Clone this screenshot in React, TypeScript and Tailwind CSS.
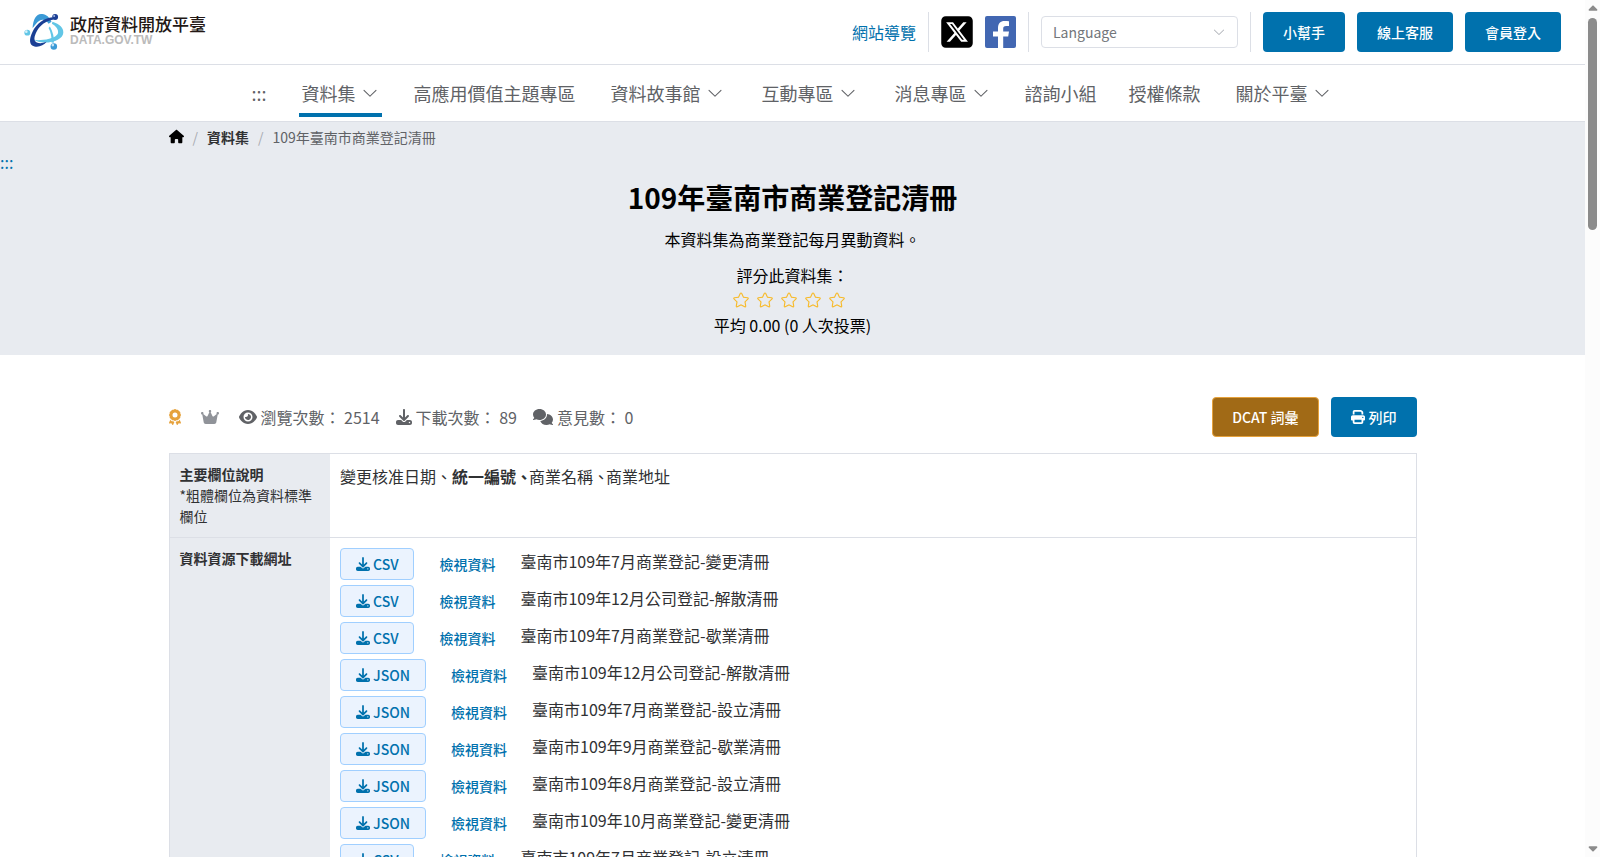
import type { ReactNode } from "react";
import {
  FaAward,
  FaCaretDown,
  FaCaretUp,
  FaComments,
  FaCrown,
  FaDownload,
  FaEye,
  FaHouse,
  FaPrint,
  FaSquareXTwitter,
} from "react-icons/fa6";

function ChevronDown({ className }: { className: string }) {
  return (
    <svg viewBox="0 0 1024 1024" fill="currentColor" aria-hidden="true" className={className}>
      <path d="M831.872 340.864 512 652.672 192.128 340.864a30.592 30.592 0 0 0-42.752 0 29.12 29.12 0 0 0 0 41.6L489.664 714.24a32 32 0 0 0 44.672 0l340.288-331.712a29.12 29.12 0 0 0 0-41.728 30.592 30.592 0 0 0-42.752 0z" />
    </svg>
  );
}

function Star() {
  return (
    <svg viewBox="0 0 1024 1024" fill="currentColor" aria-hidden="true" className="size-[18px]">
      <path d="m512 747.84 228.16 119.936a6.4 6.4 0 0 0 9.28-6.72l-43.52-254.08 184.512-179.904a6.4 6.4 0 0 0-3.52-10.88l-255.104-37.12L517.76 147.904a6.4 6.4 0 0 0-11.52 0L392.192 379.072l-255.104 37.12a6.4 6.4 0 0 0-3.52 10.88L318.08 606.976l-43.584 254.08a6.4 6.4 0 0 0 9.28 6.72L512 747.84zM313.6 924.48a70.4 70.4 0 0 1-102.144-74.24l37.888-220.928L88.96 472.96A70.4 70.4 0 0 1 128 352.896l221.76-32.256 99.2-200.96a70.4 70.4 0 0 1 126.208 0l99.2 200.96 221.824 32.256a70.4 70.4 0 0 1 39.04 120.064L774.72 629.376l37.888 220.928a70.4 70.4 0 0 1-102.144 74.24L512 820.096l-198.4 104.32z" />
    </svg>
  );
}

function LogoMark() {
  return (
    <svg viewBox="0 0 120 110" aria-hidden="true" className="h-9 w-10">
      <path d="M25 43C27 16 36 1 51 0c14-1 25 9 32 24l-9 6C68 20 60 16 52 18c-10 2-17 12-27 25Z" fill="#3b9ad6" />
      <path d="M86 24c22 7 34 19 33 33-1 17-25 30-57 30-14 0-26-3-33-8 11 2 20 1 29 0 26-3 44-12 45-22 1-9-5-19-19-27Z" fill="#62c6e6" />
      <path d="M78 38c9 16 14 34 12 50l-7-1c1-15-2-31-9-44Z" fill="#62c6e6" />
      <path d="M89 17C66 21 48 34 38 53c-9 17-10 30 0 34 7 3 17 3 30-2-8 12-25 17-37 14C14 95 14 76 25 54 37 30 60 12 86 10Z" fill="#1b3f94" />
      <circle cx="94" cy="9" r="9" fill="#1b3f94" />
      <circle cx="91" cy="6" r="3" fill="#a9bfe6" />
      <circle cx="9" cy="57" r="9" fill="#62c6e6" />
      <circle cx="6" cy="54" r="4" fill="#d5f1fa" />
      <circle cx="90" cy="99" r="10" fill="#3b9ad6" />
      <circle cx="87" cy="95" r="4" fill="#c4e4f6" />
    </svg>
  );
}

function FacebookSquare() {
  return (
    <svg viewBox="0 0 31 32" aria-hidden="true" className="h-8 w-[31px]">
      <rect width="31" height="32" rx="2" fill="#4267b2" />
      <path d="M13 32V20.500H8V15.500h5v-3.500C13 7.500 15.500 5 19.500 5c1.600 0 3 .1 4.500.3v4.700h-2.800c-2.300 0-3 1-3 2.700v2.800H24l-.8 5h-5V32Z" fill="#fff" />
    </svg>
  );
}

const navItems = [
  { label: "資料集", menu: true, active: true },
  { label: "高應用價值主題專區" },
  { label: "資料故事館", menu: true },
  { label: "互動專區", menu: true },
  { label: "消息專區", menu: true },
  { label: "諮詢小組" },
  { label: "授權條款" },
  { label: "關於平臺", menu: true },
];

const resources = [
  ["CSV", "臺南市109年7月商業登記-變更清冊"],
  ["CSV", "臺南市109年12月公司登記-解散清冊"],
  ["CSV", "臺南市109年7月商業登記-歇業清冊"],
  ["JSON", "臺南市109年12月公司登記-解散清冊"],
  ["JSON", "臺南市109年7月商業登記-設立清冊"],
  ["JSON", "臺南市109年9月商業登記-歇業清冊"],
  ["JSON", "臺南市109年8月商業登記-設立清冊"],
  ["JSON", "臺南市109年10月商業登記-變更清冊"],
  ["CSV", "臺南市109年7月商業登記-設立清冊"],
];

function PrimaryButton({ children }: { children: ReactNode }) {
  return (
    <button
      type="button"
      className="flex h-10 items-center gap-1 rounded bg-[#0071ad] px-5 text-sm font-medium text-white"
    >
      {children}
    </button>
  );
}

function Divider() {
  return <span className="h-10 w-px bg-[#dcdfe6]" />;
}

function Header() {
  return (
    <header className="flex h-[65px] shrink-0 items-center justify-between border-b border-[#dcdfe6] px-6 pb-px">
      <a href="#home" className="flex items-center gap-1.5">
        <LogoMark />
        <span className="flex flex-col pb-1">
          <span className="text-[17px] leading-5 font-medium text-[#231815]">政府資料開放平臺</span>
          <span className="font-['Liberation_Sans',sans-serif] text-xs leading-3 font-bold text-[#bbbbbb]">
            DATA.GOV.TW
          </span>
        </span>
      </a>
      <div className="flex items-center gap-3">
        <a href="#sitemap" className="text-base text-[#0071ad]">
          網站導覽
        </a>
        <Divider />
        <a href="#x" aria-label="X" className="flex w-8 justify-center text-black">
          <FaSquareXTwitter className="size-9 shrink-0" />
        </a>
        <a href="#facebook" aria-label="Facebook">
          <FacebookSquare />
        </a>
        <Divider />
        <label className="relative block">
          <select
            aria-label="Language"
            className="h-8 w-[197px] appearance-none rounded border border-[#dcdfe6] bg-white px-[11px] text-sm text-[#73767a]"
          >
            <option>Language</option>
          </select>
          <ChevronDown className="pointer-events-none absolute top-[9px] right-3 size-3.5 text-[#a8abb2]" />
        </label>
        <Divider />
        <PrimaryButton>小幫手</PrimaryButton>
        <PrimaryButton>線上客服</PrimaryButton>
        <PrimaryButton>會員登入</PrimaryButton>
      </div>
    </header>
  );
}

function MainNav() {
  return (
    <nav className="flex h-[57px] shrink-0 justify-center gap-8 border-b border-[#dcdfe6] text-lg text-[#606266]">
      <a href="#nav" className="flex h-[52px] items-center pt-1">
        :::
      </a>
      {navItems.map((item) => (
        <a
          key={item.label}
          href={`#${item.label}`}
          className={
            item.active
              ? "flex h-[52px] items-center gap-[5px] border-b-4 border-[#0071ad] px-[3px] pt-2"
              : item.menu
                ? "flex h-[52px] items-center gap-[5px] px-[3px] pt-1"
                : "flex h-[52px] items-center pt-1"
          }
        >
          {item.label}
          {item.menu && <ChevronDown className="size-[18px]" />}
        </a>
      ))}
    </nav>
  );
}

function Hero() {
  return (
    <section className="shrink-0 bg-[#e8ebf0] pb-[17px] text-black">
      <nav className="mx-auto flex h-7 w-full max-w-[1248px] items-center pt-px text-sm text-[#606266]">
        <a href="#home" aria-label="首頁" className="text-black">
          <FaHouse className="size-[15px]" />
        </a>
        <span className="px-[9px] text-[#a8abb2]">/</span>
        <a href="#dataset" className="font-bold text-[#303133]">
          資料集
        </a>
        <span className="px-[9px] text-[#a8abb2]">/</span>
        <span>109年臺南市商業登記清冊</span>
      </nav>
      <a href="#content" className="block text-base leading-[25px] text-[#0071ad]">
        :::
      </a>
      <div className="flex flex-col items-center text-base">
        <h1 className="text-[28px] leading-[44px] font-bold">109年臺南市商業登記清冊</h1>
        <p className="py-2 leading-6">本資料集為商業登記每月異動資料。</p>
        <p className="pt-1 leading-6">評分此資料集：</p>
        <div className="flex h-[25px] items-center gap-1.5 pr-2 text-[#f7ba2a]">
          {[1, 2, 3, 4, 5].map((n) => (
            <button key={n} type="button" aria-label={`${n} 星`}>
              <Star />
            </button>
          ))}
        </div>
        <p className="leading-[26px]">平均 0.00 (0 人次投票)</p>
      </div>
    </section>
  );
}

function Stats() {
  return (
    <div className="flex items-center justify-between">
      <div className="flex items-center gap-4 text-base text-[#606266]">
        <FaAward className="mr-1 h-4 w-3 text-[#e6a23c]" />
        <FaCrown className="mr-1 size-[18px] text-[#909399]" />
        <span className="flex items-center gap-1">
          <FaEye className="size-[18px]" />
          瀏覽次數： 2514
        </span>
        <span className="flex items-center gap-1">
          <FaDownload />
          下載次數： 89
        </span>
        <span className="flex items-center gap-1">
          <FaComments className="size-5" />
          意見數： 0
        </span>
      </div>
      <div className="flex gap-3">
        <button
          type="button"
          className="h-10 rounded border border-[#e6a23c] bg-[#a16a16] px-[19px] text-sm font-medium text-white"
        >
          DCAT 詞彙
        </button>
        <PrimaryButton>
          <FaPrint />
          列印
        </PrimaryButton>
      </div>
    </div>
  );
}

function Details() {
  return (
    <table className="mt-4 w-full border-collapse border border-[#dcdfe6] text-left text-[#303133]">
      <tbody>
        <tr className="border-b border-[#dcdfe6]">
          <th scope="row" className="w-[161px] bg-[#e8ebf0] p-2.5 align-top text-sm leading-[21px] font-bold">
            主要欄位說明
            <span className="block font-normal">*粗體欄位為資料標準欄位</span>
          </th>
          <td className="p-2.5 align-top text-base leading-6">
            變更核准日期、<b className="-mr-[3px]">統一編號、</b>
            <span className="-mr-[3px]">商業名稱、</span>商業地址
          </td>
        </tr>
        <tr>
          <th scope="row" className="w-[161px] bg-[#e8ebf0] p-2.5 align-top text-sm leading-[21px] font-bold">
            資料資源下載網址
          </th>
          <td className="p-2.5 align-top">
            <ul className="flex flex-col gap-[5px]">
              {resources.map(([format, title], i) => (
                <li key={i} className="flex h-8 items-center">
                  <a
                    href="#download"
                    className="flex h-8 items-center gap-[3px] rounded border border-[#a0cfff] bg-[#ebf3fe] px-[15px] text-sm font-medium text-[#0071ad]"
                  >
                    <FaDownload />
                    {format}
                  </a>
                  <a href="#preview" className="px-[25px] text-sm font-medium text-[#0071ad]">
                    檢視資料
                  </a>
                  <span className="pb-1.5 text-base leading-6">{title}</span>
                </li>
              ))}
            </ul>
          </td>
        </tr>
      </tbody>
    </table>
  );
}

function ScrollRail() {
  return (
    <div aria-hidden="true" className="flex w-[15px] shrink-0 flex-col items-center bg-[#fcfcfc] text-[#8b8b8b]">
      <FaCaretUp className="mt-0.5 mb-0.5 size-3.5" />
      <div className="h-[212px] w-[9px] rounded-full bg-[#8b8b8b]" />
      <FaCaretDown className="mt-auto mb-0.5 size-3.5" />
    </div>
  );
}

export default function App() {
  return (
    <div
      lang="zh-TW"
      className="flex h-screen overflow-hidden bg-white font-['Noto_Sans_CJK_TC',sans-serif]"
    >
      <div className="flex min-w-0 flex-1 flex-col overflow-hidden">
        <Header />
        <MainNav />
        <Hero />
        <main className="mx-auto w-full max-w-[1248px] pt-[42px]">
          <Stats />
          <Details />
        </main>
      </div>
      <ScrollRail />
    </div>
  );
}
